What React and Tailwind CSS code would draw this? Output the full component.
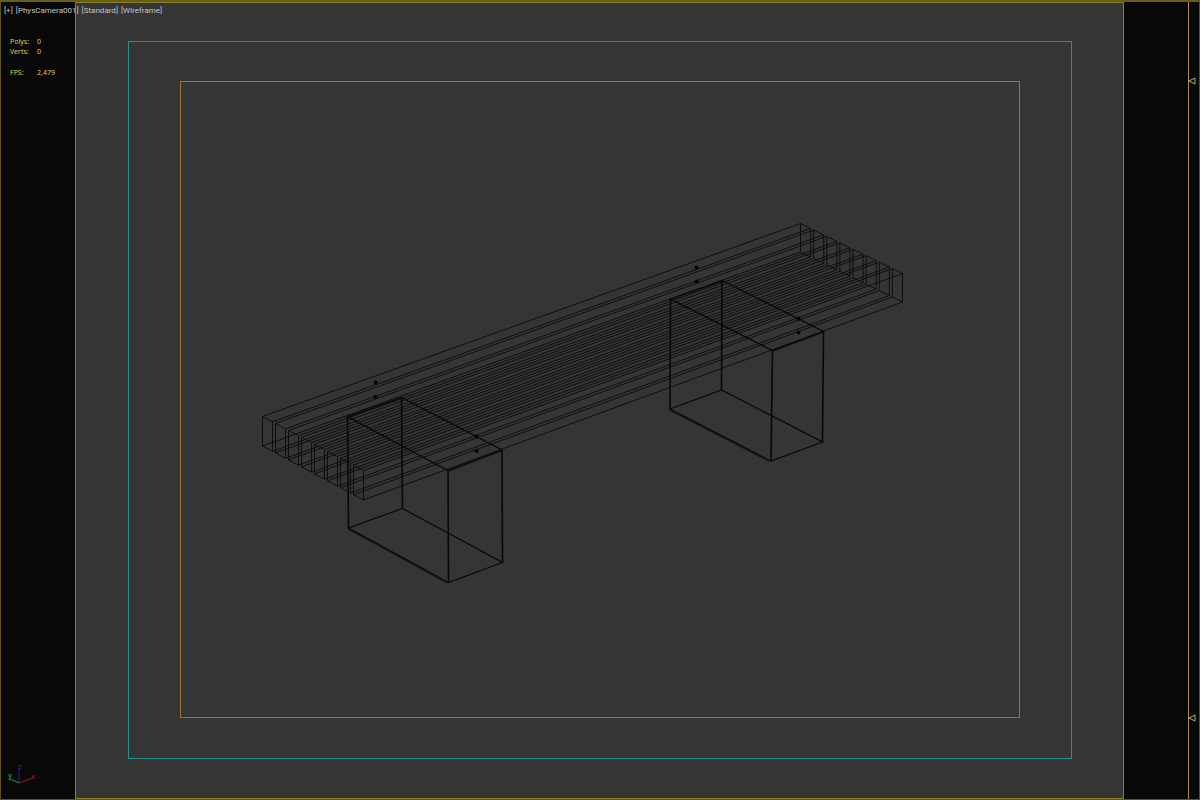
import React from 'react';

const SLAT_COUNT = 8;

// corners of the slat row at both ends of the bench, top edge, [x, y]
const LEFT_END = { from: [262.5, 416.5], to: [363.5, 470.5], drop: 29.5 };
const RIGHT_END = { from: [800.5, 223.5], to: [902.5, 273.5], drop: 28.5 };

const LEGS = [
  {
    top: [[347.5, 416.5], [401.5, 397.5], [502, 450], [448, 470.5]],
    bottom: [[348.5, 528], [402.5, 508.5], [502.5, 562.5], [448.5, 582.5]],
  },
  {
    top: [[670.5, 299], [722, 280.5], [823.5, 331.5], [772.5, 350.5]],
    bottom: [[670, 409], [721.5, 390], [822.5, 442], [771, 461]],
  },
];

const PIVOTS = [
  [375.5, 382.5], [375.5, 397], [476.5, 436.5], [476.5, 451],
  [696.5, 267.5], [696.5, 281.5], [798.5, 318.5], [798.5, 332.5],
];

function pointOn(end, t) {
  return [
    end.from[0] + (end.to[0] - end.from[0]) * t,
    end.from[1] + (end.to[1] - end.from[1]) * t,
  ];
}

function toPath(points) {
  return 'M' + points.map((p) => p.join(' ')).join('L') + 'Z';
}

function endFace(end, t0, t1) {
  const a = pointOn(end, t0);
  const b = pointOn(end, t1);
  return [a, b, [b[0], b[1] + end.drop], [a[0], a[1] + end.drop]];
}

function Slat({ index }) {
  const pitch = 1 / (SLAT_COUNT - 0.23);
  const t0 = index * pitch;
  const t1 = t0 + pitch * 0.77;
  const left = endFace(LEFT_END, t0, t1);
  const right = endFace(RIGHT_END, t0, t1);
  return (
    <g>
      <path d={toPath(left)} />
      <path d={toPath(right)} />
      {left.map((p, i) => (
        <line key={i} x1={p[0]} y1={p[1]} x2={right[i][0]} y2={right[i][1]} />
      ))}
    </g>
  );
}

function Leg({ top, bottom }) {
  return (
    <g>
      <path d={toPath(top)} />
      <path d={toPath(bottom)} />
      {top.map((p, i) => (
        <line key={i} x1={p[0]} y1={p[1]} x2={bottom[i][0]} y2={bottom[i][1]} strokeWidth="1.6" />
      ))}
      {/* bevel edge on the floor side */}
      <line x1={bottom[0][0]} y1={bottom[0][1] + 1.5} x2={bottom[3][0] - 2} y2={bottom[3][1] + 0.5} strokeWidth="0.7" />
      <line x1={top[0][0]} y1={top[0][1] + 1} x2={top[1][0]} y2={top[1][1] + 1} strokeWidth="0.7" />
      <line x1={top[3][0]} y1={top[3][1] + 1} x2={top[2][0]} y2={top[2][1] + 1} strokeWidth="0.7" />
    </g>
  );
}

function BenchWireframe() {
  return (
    <svg viewBox="181 82 838 635" className="w-full flex-1 min-h-0" fill="none" role="img" aria-label="Bench wireframe">
      <g stroke="#0a0a0a" strokeWidth="0.9">
        {Array.from({ length: SLAT_COUNT }, (_, i) => <Slat key={i} index={i} />)}
      </g>
      <g stroke="#080808" strokeWidth="1.3">
        {LEGS.map((leg, i) => <Leg key={i} {...leg} />)}
      </g>
      <g fill="#050505">
        {PIVOTS.map(([x, y], i) => <circle key={i} cx={x} cy={y} r="2" />)}
      </g>
    </svg>
  );
}

function AxisTripod() {
  return (
    <svg viewBox="0 0 32 24" className="w-8 h-6" fill="none">
      <path d="M13 20V6" stroke="#1c1a72" strokeWidth="1.3" />
      <path d="M13 20L26 15" stroke="#8a1a2c" strokeWidth="1.3" />
      <path d="M13 20L4 16" stroke="#1d8a2a" strokeWidth="1.3" />
      <g fontSize="7" fontFamily="Liberation Sans, sans-serif" fontWeight="bold">
        <text x="12" y="6" fill="#25228a">z</text>
        <text x="25" y="16" fill="#8a1a2c">x</text>
        <text x="2" y="15" fill="#1d9a2a">y</text>
      </g>
    </svg>
  );
}

function TrackMarker() {
  return (
    <svg viewBox="0 0 8 8" className="w-2 h-2" fill="none">
      <path d="M0 4L6 1V7Z" stroke="#b8b068" />
    </svg>
  );
}

export default function App() {
  return (
    <div className="relative min-h-screen flex flex-col bg-[#080808] border border-t-2 border-[#63511a] border-t-[#665d18] font-['Noto_Sans','Open_Sans',sans-serif] leading-[10px]">
      {/* Viewport menus, drawn over the camera view */}
      <nav className="absolute left-[3px] top-1 flex gap-[3px] font-['Roboto',sans-serif] text-[8px] text-[#c4c4c4]">
        <button type="button">[+]</button>
        <button type="button">[PhysCamera001]</button>
        <button type="button">[Standard]</button>
        <button type="button">[Wireframe]</button>
      </nav>

      <div className="flex flex-1">
        {/* Statistics */}
        <aside className="w-[74px] shrink-0 flex flex-col justify-between pt-[35px] pb-3 pl-[9px]">
          <dl className="grid grid-cols-[27px_1fr] text-[#d8d250] text-[7px]">
            <dt>Polys:</dt>
            <dd>0</dd>
            <dt>Verts:</dt>
            <dd>0</dd>
            <dt className="mt-[11px]">FPS:</dt>
            <dd className="mt-[11px]">2,479</dd>
          </dl>
          <div className="-ml-1"><AxisTripod /></div>
        </aside>

        {/* Camera view with its safe frames */}
        <main className="flex-1 flex flex-col bg-[#353535] border border-[#877f26] pl-[52px] pr-[51px] pt-[38px] pb-[39px]">
          <div className="flex-1 flex flex-col border border-[#239092] px-[51px] pt-[39px] pb-10">
            <div className="flex-1 flex flex-col border border-[#9a762a]">
              <BenchWireframe />
            </div>
          </div>
        </main>

        <div className="w-16 shrink-0" />
        <div className="w-[11px] shrink-0 flex flex-col justify-between border-l border-[#b08c4c] pt-[75px] pb-[77px]">
          <TrackMarker />
          <TrackMarker />
        </div>
      </div>
    </div>
  );
}
